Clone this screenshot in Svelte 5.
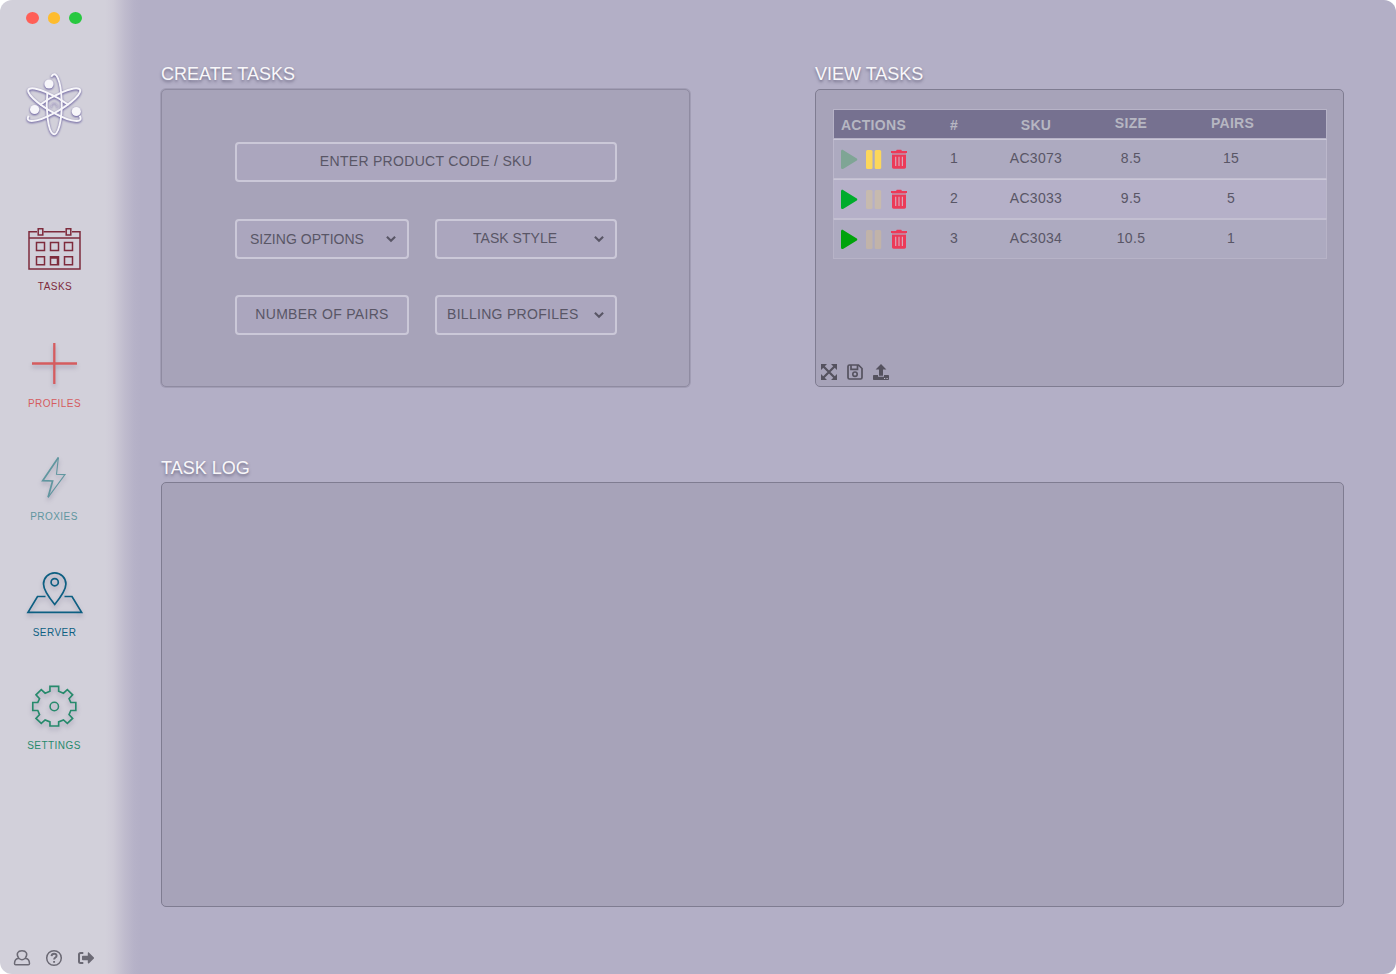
<script>
  const tasks = [
    { id: 1, sku: 'AC3073', size: '8.5', pairs: '15', play: '#7fa595', pause: '#fcd75b' },
    { id: 2, sku: 'AC3033', size: '9.5', pairs: '5', play: '#00ac2c', pause: '#c7baae' },
    { id: 3, sku: 'AC3034', size: '10.5', pairs: '1', play: '#00a30b', pause: '#c1b3a9' }
  ];
  const tooth = 'M-4.5-15.5v-5h9v5l5 2 4-3.6 5.5 5.3-3.7 4 1.8 3.8h5.2v8.2h-5.2l-1.8 4.2 3.7 3.8-5.5 5.2-4-3.6-5 2v4.2h-9v-4.2l-5-2-4 3.6-5.5-5.2 3.7-3.8-1.8-4.2h-5.2v-8.2h5.2l1.8-3.8-3.7-4 5.5-5.3 4 3.6z';
  const orbit = 'M-3-27.700A7.500 30 0 1 1-6.800-12.700';
</script>

{#snippet chevron()}
  <svg class="chevron" width="12" height="8" viewBox="0 0 12 8"><path d="M1.9 1.7 6 5.7l4.1-4" fill="none" stroke="#595666" stroke-width="2.1" /></svg>
{/snippet}

<div class="window">
  <aside>
    <div class="lights"><i class="red"></i><i class="amber"></i><i class="green"></i></div>
    <svg class="logo" width="72" height="76" viewBox="18 68 72 76">
      <g class="atom" fill="none" stroke="#f7f6fa" stroke-width="1.900">
        <g transform="translate(54.200 104.500)">
          <path d={orbit} />
          <path d={orbit} transform="rotate(120)" />
          <path d={orbit} transform="scale(-1 1) rotate(120)" />
        </g>
        <path d="M51.500 107a3 3 0 1 1 5.400 0" stroke="#c4bed4" stroke-width="1" />
        <g fill="#f7f6fa" stroke="none"><circle cx="49" cy="84" r="4.600" /><circle cx="34.600" cy="109.500" r="4.600" /><circle cx="76.300" cy="111.500" r="4.600" /></g>
      </g>
    </svg>
    <nav>
      <a class="tasks" href="#tasks">
        <svg viewBox="0 220 109 60">
          <path d="M37 231.800H29V269h51v-37.200h-8M43.500 231.800h22M29 238h51" />
          <path d="M38.200 228.700h4.600v6.300h-4.600zM66.200 228.700h4.600v6.300h-4.600zM36.500 242.500h8v8h-8zM50.500 242.500h8v8h-8zM64.500 242.500h8v8h-8zM36.500 256.800h8v8h-8zM50.500 256.800h8v8h-8zM64.500 256.800h8v8h-8zM51 258h6.500v6.500" />
        </svg><span>TASKS</span>
      </a>
      <a class="profiles" href="#profiles">
        <svg viewBox="0 337 109 60"><path d="M54.300 343v41M32 363.500h45" stroke-width="2.300" /></svg><span>PROFILES</span>
      </a>
      <a class="proxies" href="#proxies">
        <svg viewBox="0 450 109 60"><path d="M58.400 457.500 42.700 480.700l9.900.3-4.500 16.300" stroke-width="1.700" /><path d="m58.400 457.500-1.900 16.800 8.500.3-16.900 22.700" stroke-width="1.100" /></svg><span>PROXIES</span>
      </a>
      <a class="server" href="#server">
        <svg viewBox="0 566 109 60"><path d="M54.700 604.500C49 597.500 43.500 590.500 43.500 584a11.200 11.200 0 0 1 22.400 0c0 6.500-5.500 13.500-11.200 20.500z" stroke-width="1.700" /><circle cx="54.700" cy="582.200" r="3.600" stroke-width="1.700" /><path d="M45.500 596.500h-8L28 612.300h53.600L72 596.500h-7.500" stroke-width="1.700" /></svg><span>SERVER</span>
      </a>
      <a class="settings" href="#settings">
        <svg viewBox="0 679 109 60"><path transform="translate(54.300 706.400) scale(.965 .98)" d={tooth} stroke-width="1.700" /><circle cx="54.300" cy="706.500" r="4.200" /></svg><span>SETTINGS</span>
      </a>
    </nav>
    <footer>
      <svg width="18" height="18" viewBox="0 0 18 18"><path d="M5.800 9.300C2.500 4.500 5 1.800 9 1.800s6.500 2.700 3.200 7.500c2.500.3 4.200 1.500 4.300 5.200 0 .8-.4 1.300-1.200 1.300H2.700c-.8 0-1.200-.5-1.200-1.300.1-3.700 1.800-4.900 4.300-5.200zm0 0c2 1.800 4.400 1.800 6.400 0" /></svg>
      <svg width="18" height="18" viewBox="0 0 18 18"><circle cx="9" cy="9" r="7.300" /><path d="M6.500 7.100c.2-1.700 1.200-2.400 2.600-2.400 1.500 0 2.500.8 2.500 2 0 2-2.500 1.800-2.500 3.900M9.100 11.900v1.800" stroke-width="1.900" /></svg>
      <svg width="18" height="18" viewBox="0 0 18 18"><path d="M6.300 4H3.700C2.500 4 2 4.500 2 5.600v6.900C2 13.600 2.500 14 3.700 14h2.600" stroke-width="2" /><path d="M5.800 6.800h5V4.200c0-.9.700-1.100 1.300-.5l4.800 4.700c.3.300.3.800 0 1.100l-4.800 4.700c-.6.600-1.300.3-1.300-.5v-2.500h-5c-.5 0-.8-.3-.8-.8V7.600c0-.5.300-.8.800-.8z" fill="#6c6a75" stroke="none" /></svg>
    </footer>
  </aside>

  <main>
    <section class="create">
      <h2>CREATE TASKS</h2>
      <div class="panel form">
        <div class="field wide"><span class="label">ENTER PRODUCT CODE / SKU</span></div>
        <div class="field sizing"><span class="label">SIZING OPTIONS</span>{@render chevron()}</div>
        <div class="field style"><span class="label">TASK STYLE</span>{@render chevron()}</div>
        <div class="field number"><span class="label">NUMBER OF PAIRS</span></div>
        <div class="field billing"><span class="label">BILLING PROFILES</span>{@render chevron()}</div>
      </div>
    </section>

    <section class="view">
      <h2>VIEW TASKS</h2>
      <div class="panel list">
        <div class="table">
          <div class="row head"><span class="first">ACTIONS</span><span>#</span><span>SKU</span><span class="up">SIZE</span><span class="up last">PAIRS</span></div>
          {#each tasks as t (t.id)}
            <div class="row" class:alt={t.id === 2}>
              <div class="actions">
                <svg width="80" height="38" viewBox="0 -.4 80 38">
                  <path d="M7 11.200c0-1.700 1-2.200 2.400-1.400l13 8c1.200.8 1.200 1.700 0 2.500l-13 8c-1.400.8-2.400.3-2.400-1.400z" fill={t.play} />
                  <g fill={t.pause}><rect x="32" y="9.500" width="6.500" height="19" rx="1.500" /><rect x="40.700" y="9.500" width="6.500" height="19" rx="1.500" /></g>
                  <path d="M57 10.600h5l.8-1.300h4.400l.8 1.300h5v2.100H57z" fill="#ec3a58" />
                  <path d="M58 14.300h14v12.400c0 1-.7 1.700-1.700 1.700H59.700c-1 0-1.700-.7-1.700-1.700z" fill="#ec3a58" />
                  <path d="M58 13.500h14" stroke="#cf7890" stroke-width="1.600" />
                  <path d="M61.700 16.300v9.400M65 16.300v9.400M68.400 16.300v9.400" stroke="#d9a5b8" stroke-width="1.200" />
                </svg>
              </div>
              <span>{t.id}</span><span>{t.sku}</span><span>{t.size}</span><span>{t.pairs}</span>
            </div>
          {/each}
        </div>
        <div class="tools">
          <svg width="18" height="18" viewBox="0 0 18 18"><path d="m3 3 12 12M15 3 3 15" stroke="#55525f" stroke-width="2.200" /><path d="M1 1h6L1 7zM17 1v6l-6-6zM1 17v-6l6 6zM17 17h-6l6-6z" fill="#55525f" /></svg>
          <svg width="18" height="18" viewBox="0 0 18 18"><path d="M2 3.500C2 2.400 2.500 2 3.500 2h9L16 5.500v9c0 1-.5 1.500-1.500 1.500h-11c-1 0-1.500-.5-1.500-1.500zM5 2v4.300h6.500V2" fill="none" stroke="#55525f" stroke-width="1.700" /><circle cx="9" cy="11.200" r="2.200" fill="none" stroke="#55525f" stroke-width="1.600" /></svg>
          <svg width="18" height="18" viewBox="0 0 18 18"><path d="M9 .9 14.400 6.500H11v6.300H7V6.500H3.600zM1 12.800c0-.5.300-.8.800-.8H6v1.800h6V12h4.200c.5 0 .8.300.8.800v3.400c0 .5-.3.800-.8.800H1.800c-.5 0-.8-.3-.8-.8z" fill="#55525f" /><path d="M12 15.500h1.200M14.500 15.500h1.200" stroke="#bcb8c8" stroke-width="1.200" /></svg>
        </div>
      </div>
    </section>

    <section class="log">
      <h2>TASK LOG</h2>
      <div class="panel"></div>
    </section>
  </main>
</div>

<style>
  :global(body) { background: #fff; }
  * { box-sizing: border-box; }
  .window {
    display: flex;
    width: 1396px;
    height: 974px;
    overflow: hidden;
    border-radius: 12px;
    font-family: "Liberation Sans", Arial, sans-serif;
    background: linear-gradient(90deg, #d2d0da 0, #d2d0da 105px, #cecbd7 113px, #bfbbcd 125px, #b6b2c8 134px, #b3afc6 141px);
  }
  aside { display: flex; flex-direction: column; width: 109px; }
  .lights { display: flex; gap: 8.700px; padding: 12px 0 0 26px; }
  .lights i { width: 12.900px; height: 12px; border-radius: 50%; }
  .red { background: #ff5f57; }
  .amber { background: #febc2e; }
  .green { background: #28c840; }
  .logo { margin: 44px 0 0 18px; }
  .atom { filter: drop-shadow(0 1.500px .8px #5b5095); }
  nav { display: flex; flex-direction: column; margin-top: 76px; }
  nav a { display: flex; flex-direction: column; align-items: center; text-decoration: none; color: inherit; }
  nav a svg { width: 109px; height: 60px; fill: none; stroke: currentColor; stroke-width: 1.500px; }
  nav a:not(.tasks) svg { filter: drop-shadow(0 3px 2px rgba(60, 50, 90, .28)); }
  nav span { height: 12px; padding: 1px 0 0; font-size: 10px; line-height: 12px; letter-spacing: .45px; }
  nav .tasks { color: #7e2b3c; }
  nav .profiles { color: #d55c5f; margin-top: 45px; }
  nav .proxies { color: #60969f; margin-top: 41px; }
  nav .server { color: #0d5f82; margin-top: 44px; }
  nav .settings { color: #278a6c; margin-top: 41px; }
  nav .tasks span { padding-left: 1px; }
  nav .proxies span, nav .settings span { padding-right: 1px; }
  footer { display: flex; gap: 14px; margin: auto 0 7px 13px; }
  footer svg { fill: none; stroke: #6c6a75; stroke-width: 1.500px; }

  main {
    display: grid;
    grid-template: 324px 424px / 530px 529px;
    column-gap: 124px;
    row-gap: 70px;
    padding: 63px 0 0 52px;
    align-content: start;
  }
  section { display: flex; flex-direction: column; }
  h2 {
    margin: 0;
    height: 26px;
    font-size: 18px;
    font-weight: 400;
    line-height: 22px;
    color: #f8f7f9;
    text-shadow: 0 2px 3px rgba(50, 45, 75, .5);
  }
  .panel { flex: 1; background: #a7a3b9; border: 1px solid #7f7c91; border-radius: 5px; }
  .create .panel { border-color: #8f8ba1; box-shadow: 0 0 0 1px #a19db4; width: 529px; height: 298px; flex: none; }
  .view .panel { flex: none; height: 298px; }
  .log { grid-column: 1 / -1; width: 1183px; height: 450px; }
  .log h2 { height: 25px; }
  .form {
    display: grid;
    grid-template-columns: 174px 182px;
    grid-template-rows: 77px 76px 40px;
    column-gap: 26px;
    align-items: start;
    align-content: start;
    padding: 52px 0 0 73px;
  }
  .field {
    display: flex;
    align-items: center;
    justify-content: center;
    height: 40px;
    border: 2px solid #cbc8d8;
    border-radius: 4px;
    background: #aba6be;
    color: #595666;
    font-size: 14px;
    line-height: 16px;
    letter-spacing: .3px;
    white-space: nowrap;
  }
  .field .label { margin-top: -2px; }
  .wide { grid-column: 1 / -1; }
  .chevron { margin-left: auto; margin-right: 10px; }
  .sizing, .style { letter-spacing: .03px; }
  .sizing { padding-left: 13px; }
  .sizing .label { margin-top: 0; }
  .style { padding-left: 36px; }
  .billing { padding-left: 10px; }

  .list { display: flex; flex-direction: column; padding: 19px 0 5px 17px; }
  .table { width: 494px; font-size: 14px; letter-spacing: .3px; color: #595666; }
  .row {
    display: grid;
    grid-template-columns: 80px 80px 84px 106px 94px;
    align-items: center;
    height: 40px;
    border: 1px solid #bbb7cb;
    border-top-color: #cac7d7;
    border-bottom-color: #c3bfd1;
    background: #adaac0;
  }
  .row:last-child { border-color: #c3bfd1 #b7b3c7 #b7b3c7; }
  .row.alt { background: #b5b0c8; }
  .row span { text-align: center; line-height: 16px; margin-top: -2px; }
  .row.head { height: 30px; background: #767190; border-color: #b7b3c7; color: #b6b7c2; font-weight: 700; }
  .row.head span { margin-top: 1px; }
  .row.head .up { margin-top: -3px; }
  .row.head .first { margin-left: -1px; }
  .row.head .last { margin-left: 3px; }
  .actions { height: 38px; }
  .actions svg { display: block; }
  .tools { display: flex; gap: 8px; margin: auto 0 0 -13px; }
</style>
